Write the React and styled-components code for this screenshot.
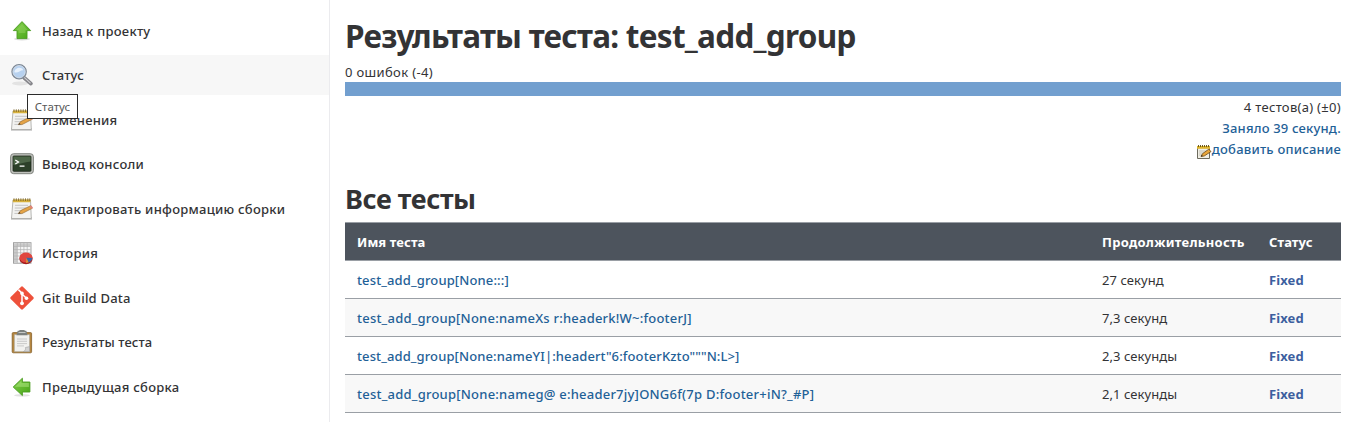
import React from 'react';
import styled, { createGlobalStyle } from 'styled-components';

const GlobalStyle = createGlobalStyle`
  *, *::before, *::after { box-sizing: border-box; }
  body {
    margin: 0;
    background: #fff;
    color: #333335;
    font-family: "Noto Sans", "Open Sans", sans-serif;
    font-size: 13px;
    overflow: hidden;
  }
`;

const Page = styled.div`
  display: flex;
  height: 422px;
  overflow: hidden;
`;

const SidePanel = styled.nav`
  position: relative;
  flex: 0 0 330px;
  display: flex;
  flex-direction: column;
  gap: 4.5px;
  padding-top: 10.6px;
  border-right: 1px solid #ebebee;
`;

const Task = styled.a`
  display: flex;
  align-items: center;
  gap: 8px;
  height: 40px;
  flex: none;
  padding-left: 10px;
  background: ${(p) => (p.$active ? '#f7f7f7' : 'transparent')};
  color: #333335;
  font-weight: 500;
  white-space: nowrap;
`;

const TaskIcon = styled.svg`
  display: block;
  width: 24px;
  height: 24px;
  flex: none;
`;

const Label = styled.span`
  display: inline-block;
  letter-spacing: ${(p) => p.$track || 0}px;
  white-space: pre;
`;

const Tooltip = styled.div`
  position: absolute;
  left: 27px;
  top: 94px;
  width: 51px;
  height: 25px;
  border: 1px solid #2b2b2b;
  background: #fff;
  color: #575757;
  font-size: 11.5px;
  line-height: 24px;
  text-align: center;
`;

const Main = styled.main`
  flex: 1;
  min-width: 0;
  padding: 16px 9px 0 15px;
`;

const Title = styled.h1`
  margin: 0;
  height: 46px;
  font-size: 31.5px;
  line-height: 40px;
  font-weight: 700;
`;

const Failures = styled.div`
  height: 20px;
  line-height: 20px;
`;

const Bar = styled.div`
  height: 14px;
  background: #729fcf;
`;

const Summary = styled.div`
  display: flex;
  flex-direction: column;
  align-items: flex-end;
  line-height: 21px;
  padding-top: 1px;
`;

const Link = styled.a`
  display: flex;
  align-items: center;
  color: #1f6197;
  font-weight: 500;
`;

const NoteIcon = styled.svg`
  display: block;
  width: 16px;
  height: 16px;
  margin-top: 4px;
`;

const Heading = styled.h2`
  margin: 20px 0 5px;
  height: 37px;
  font-size: 27px;
  line-height: 37px;
  font-weight: 700;
`;

const Table = styled.div`
  border-top: 1px solid #9a9fa5;
`;

const Row = styled.div`
  display: grid;
  grid-template-columns: 745px 167px 1fr;
  align-items: center;
  height: 38px;
  padding-left: 12px;
  border-bottom: 1px solid #9a9fa5;
  background: ${(p) => (p.$striped ? '#f8f8f8' : '#fff')};
`;

const HeadRow = styled(Row)`
  background: #4d545d;
  color: #fff;
  font-weight: 700;
`;

const Fixed = styled.span`
  color: #3d5f9f;
  font-weight: 700;
  letter-spacing: 0.1px;
`;

const ArrowUp = () => (
  <g>
    <ellipse cx="12" cy="20" rx="8" ry="1.5" fill="#ddd" />
    <path d="M12 2.6 20.7 11.6H17V19.6H7V11.6H3.3Z" fill="url(#green)" stroke="#4a9c20" strokeWidth=".9" strokeLinejoin="round" />
    <path d="M12 5 18 11.2H15.4V14H8.6V11.2H6Z" fill="#a6e070" opacity=".35" />
  </g>
);

const ArrowLeft = () => (
  <g>
    <ellipse cx="12" cy="20.3" rx="8" ry="1.3" fill="#e2e2e2" />
    <path d="M3.2 12 12.4 3.2V7H19.9V17H12.4V20.6Z" fill="url(#green)" stroke="#4a9c20" strokeWidth=".9" strokeLinejoin="round" />
    <path d="M5 11.8 11.5 5.4V8H18.9V12Z" fill="#b2e785" opacity=".5" />
  </g>
);

const Magnifier = () => (
  <g>
    <ellipse cx="10" cy="20.4" rx="8" ry="2" fill="#e3e3e3" />
    <path d="m14.4 15 6.5 5.6" stroke="#85858a" strokeWidth="3.8" strokeLinecap="round" />
    <path d="m14.2 14.4 6 5.4" stroke="#cfcfd2" strokeWidth="1.1" strokeLinecap="round" />
    <circle cx="9.1" cy="8.7" r="7" fill="#b7d1ef" stroke="#7c8795" strokeWidth="1.5" />
    <circle cx="9.1" cy="8.7" r="6.2" fill="none" stroke="#dce4ee" strokeWidth=".8" />
    <path d="M4.4 9.2C4.6 4.5 11.7 3 13.2 7.2 10 7 8 10.5 4.4 9.2Z" fill="#e7f1fc" />
  </g>
);

const Notepad = () => (
  <g>
    <path d="M1 20.2H22V22.8H1Z" fill="#c9c9c9" />
    <path d="M3 3H20.5L21.3 21.5H1.5Z" fill="#f3f3f1" stroke="#a6a6a2" strokeWidth=".8" />
    <path d="M3 2.5H20.5V5.3H2.8Z" fill="#d8b23e" />
    <path d="M4 1.3V4M6.3 1.3V4M8.6 1.3V4M10.9 1.3V4M13.2 1.3V4M15.5 1.3V4M17.8 1.3V4M19.8 1.3V4" stroke="#765f24" strokeWidth=".8" />
    <path d="M5 8.3H18M4.8 11H16M4.6 13.7H12M4.4 16.4H9" stroke="#bdbdbd" strokeWidth=".9" />
    <path d="M8.3 16.6 10.6 13.6 20.7 8.7 22.2 11.3 12 16.6Z" fill="#e5a447" stroke="#8e6225" strokeWidth=".6" />
    <path d="M19.6 9.3 21.4 8.4 23 11.1 21.1 12Z" fill="#df837b" />
    <path d="M8.3 16.6 9.5 15 10.6 16.5Z" fill="#333" />
  </g>
);

const SmallNote = () => (
  <g>
    <path d="M1.5 2.5H13.5V14.5H1.5Z" fill="#f0eee4" stroke="#6d6b5e" />
    <path d="M1 2H14V4.8H1Z" fill="#dfb52f" />
    <path d="M2.5 1V3M4.5 1V3M6.5 1V3M8.5 1V3M10.5 1V3M12.5 1V3" stroke="#5e4b12" strokeWidth=".9" />
    <path d="M3 7H11M3 9H8M3 11H6" stroke="#b7b5aa" strokeWidth=".8" />
    <path d="M5 12.5 6.5 9.7 12.8 5.2 15 7.6 8.2 12Z" fill="#e9a63a" stroke="#6f4a15" strokeWidth=".8" />
    <path d="M5 12.5 5.8 11 6.8 12.1Z" fill="#222" />
  </g>
);

const Terminal = () => (
  <g>
    <rect x=".6" y="1.7" width="22.8" height="20" rx="3" fill="#bfc1bc" stroke="#777a75" strokeWidth=".9" />
    <rect x="3" y="4" width="18" height="15.3" rx=".8" fill="#2c4029" stroke="#1d271b" strokeWidth=".8" />
    <path d="M3.4 4.4H20.6V9.5C14 10 9 12.2 3.4 13Z" fill="#5f7b59" opacity=".65" />
    <path d="m5.3 8 3.2 2-3.2 2M9.6 14.2H14.5" fill="none" stroke="#fff" strokeWidth="1.3" />
  </g>
);

const History = () => (
  <g>
    <rect x="3.5" y="1.7" width="17.5" height="20.5" fill="#f6f6f6" stroke="#999" strokeWidth=".9" />
    <path d="M4 2.2H20.5V5.4H7.3V21.7H4Z" fill="#cbcbcb" />
    <path d="M4 5.4H20.5M4 8.6H20.5M4 11.8H20.5M4 15H20.5M4 18.2H20.5M7.3 2V22M10.6 2V22M13.9 2V22M17.2 2V22" stroke="#b1b1b1" strokeWidth=".7" />
    <ellipse cx="16" cy="17.8" rx="6.6" ry="5.4" fill="#a61c1c" />
    <ellipse cx="16" cy="16.6" rx="6.4" ry="5" fill="#e04740" />
    <path d="M16.3 16.8V21.7C19.8 21.7 22.3 19.5 22.2 17Z" fill="#3a66a8" />
    <path d="M16.3 16.8 18.6 21.3 16 22.1Z" fill="#e8912e" />
  </g>
);

const Git = () => (
  <g>
    <path d="M11.1.7a1.3 1.3 0 0 1 1.8 0L23.3 11.1a1.3 1.3 0 0 1 0 1.8L12.9 23.3a1.3 1.3 0 0 1-1.8 0L.7 12.9a1.3 1.3 0 0 1 0-1.8Z" fill="#ee513b" />
    <path d="M8.4 3.6 12 7.2V17.5M12 8 16.4 12.2" fill="none" stroke="#fff" strokeWidth="1.5" />
    <circle cx="12" cy="7.4" r="1.8" fill="#fff" />
    <circle cx="12" cy="17.3" r="1.9" fill="#fff" />
    <circle cx="16.5" cy="12.2" r="1.8" fill="#fff" />
  </g>
);

const Clipboard = () => (
  <g>
    <rect x="2.2" y="2.6" width="19.4" height="20.2" rx="1" fill="#b5863f" stroke="#84602b" strokeWidth=".8" />
    <path d="M4.4 4.6H19.5V21.6H4.4Z" fill="#f1f1ef" stroke="#a7a7a1" strokeWidth=".5" />
    <path d="M7 9H17M7 11.3H17M7 13.6H17M7 15.9H14" stroke="#c5c5c5" strokeWidth=".9" />
    <path d="M19.5 16.6V21.6H13.4C15.6 20.6 15.7 19 15.4 17.5Z" fill="#d2d2d2" stroke="#999" strokeWidth=".5" />
    <path d="M9 .8C9.2-.4 14.8-.4 15 .8H16.3L17.6 5.2H6.4L7.7.8Z" fill="#7c807e" />
    <path d="M8.5 2.5H15.5" stroke="#c5c8c6" strokeWidth="1" />
  </g>
);

const TASKS = [
  { text: 'Назад к проекту', icon: ArrowUp, track: 0.27 },
  { text: 'Статус', icon: Magnifier, active: true, track: 0.15 },
  { text: 'Изменения', icon: Notepad, track: 0.22 },
  { text: 'Вывод консоли', icon: Terminal, track: 0.28 },
  { text: 'Редактировать информацию сборки', icon: Notepad, track: 0.26 },
  { text: 'История', icon: History, track: 0.25 },
  { text: 'Git Build Data', icon: Git, track: 0.2 },
  { text: 'Результаты теста', icon: Clipboard, track: 0.1 },
  { text: 'Предыдущая сборка', icon: ArrowLeft, track: 0.28 },
];

const TESTS = [
  { name: 'test_add_group[None:::]', time: '27 секунд', track: 0.13 },
  { name: 'test_add_group[None:nameXs r:headerk!W~:footerJ]', time: '7,3 секунд', track: 0.22 },
  { name: 'test_add_group[None:nameYI|:headert"6:footerKzto"""N:L>]', time: '2,3 секунды', track: 0.11 },
  { name: 'test_add_group[None:nameg@ e:header7jy]ONG6f(7p D:footer+iN?_#P]', time: '2,1 секунды', track: 0.23 },
];

export default function App() {
  return (
    <Page>
      <GlobalStyle />
      <SidePanel>
        {TASKS.map(({ text, icon: Icon, active, track }) => (
          <Task key={text} $active={active}>
            <TaskIcon viewBox="0 0 24 24" fill="none">
              <defs>
                <linearGradient id="green" x1="0" y1="0" x2="1" y2="1">
                  <stop offset="0" stopColor="#83cf4c" />
                  <stop offset="1" stopColor="#46a516" />
                </linearGradient>
              </defs>
              <Icon />
            </TaskIcon>
            <Label $track={track}>{text}</Label>
          </Task>
        ))}
        <Tooltip>Статус</Tooltip>
      </SidePanel>
      <Main>
        <Title><Label $track={-0.73}>Результаты теста: test_add_group</Label></Title>
        <Failures><Label $track={0.35}>0 ошибок (-4)</Label></Failures>
        <Bar />
        <Summary>
          <Label $track={0.3}>4 тестов(а) (±0)</Label>
          <Link><Label $track={0.18}>Заняло 39 секунд.</Label></Link>
          <Link>
            <NoteIcon viewBox="0 0 16 16" fill="none"><SmallNote /></NoteIcon>
            <Label $track={0.22}>добавить описание</Label>
          </Link>
        </Summary>
        <Heading><Label $track={-0.42}>Все тесты</Label></Heading>
        <Table>
          <HeadRow>
            <Label $track={0.1}>Имя теста</Label>
            <Label $track={0.28}>Продолжительность</Label>
            <Label $track={0.1}>Статус</Label>
          </HeadRow>
          {TESTS.map((t, i) => (
            <Row key={t.name} $striped={i % 2 === 1}>
              <Link><Label $track={t.track}>{t.name}</Label></Link>
              <Label $track={0.07}>{t.time}</Label>
              <Fixed>Fixed</Fixed>
            </Row>
          ))}
        </Table>
      </Main>
    </Page>
  );
}
